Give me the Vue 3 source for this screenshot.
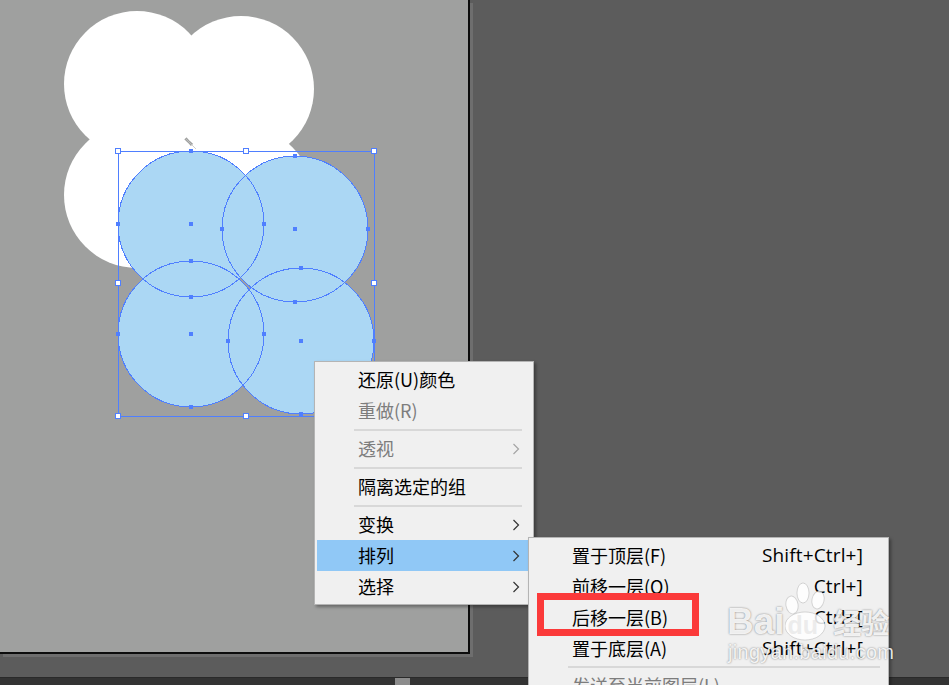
<script setup>
const whites = [
  { cx: 137, cy: 84 },
  { cx: 241, cy: 89 },
  { cx: 137, cy: 195 },
  { cx: 241, cy: 199 }
]
const blues = [
  { cx: 191, cy: 224 },
  { cx: 295, cy: 229 },
  { cx: 191, cy: 334 },
  { cx: 301, cy: 341 }
]
const r = 73
const handles = [
  [118, 151], [246, 151], [374, 151],
  [118, 283], [374, 283],
  [118, 416], [246, 416], [374, 416]
]
const anchors = blues.flatMap(c => [
  [c.cx, c.cy],
  [c.cx - r, c.cy],
  [c.cx + r, c.cy],
  [c.cx, c.cy - r],
  [c.cx, c.cy + r]
])
const mainMenu = [
  { label: '还原(U)颜色' },
  { label: '重做(R)', disabled: true },
  { sep: true },
  { label: '透视', disabled: true, arrow: true },
  { sep: true },
  { label: '隔离选定的组' },
  { sep: true },
  { label: '变换', arrow: true },
  { label: '排列', arrow: true, active: true },
  { label: '选择', arrow: true }
]
const subMenu = [
  { label: '置于顶层(F)', key: 'Shift+Ctrl+]' },
  { label: '前移一层(O)', key: 'Ctrl+]' },
  { label: '后移一层(B)', key: 'Ctrl+[' },
  { label: '置于底层(A)', key: 'Shift+Ctrl+[' },
  { sep: true },
  { label: '发送至当前图层(L)', disabled: true }
]
</script>

<template>
  <div class="app">
    <div class="workspace">
      <div class="artboard"></div>
    </div>
    <div class="scrollbar"><div class="thumb"></div></div>

    <svg class="art" width="949" height="685" viewBox="0 0 949 685">
      <circle v-for="(c, i) in whites" :key="'w' + i" :cx="c.cx" :cy="c.cy" :r="r" fill="#fff" />
      <path d="M186 139 L196 149" stroke="#c4c4c4" stroke-width="0.8" fill="none" />
      <circle v-for="(c, i) in blues" :key="'f' + i" :cx="c.cx" :cy="c.cy" :r="r" fill="#abd7f4" />
      <circle v-for="(c, i) in blues" :key="'s' + i" :cx="c.cx" :cy="c.cy" :r="r" fill="none" stroke="#4f7fff" stroke-width="1" shape-rendering="crispEdges" />
      <rect x="118.5" y="151.5" width="256" height="265" fill="none" stroke="#4f7fff" stroke-width="1" />
      <rect v-for="(a, i) in anchors" :key="'a' + i" :x="a[0] - 2" :y="a[1] - 2" width="4" height="4" fill="#4f7fff" />
      <rect v-for="(h, i) in handles" :key="'h' + i" :x="h[0] - 2.5" :y="h[1] - 2.5" width="5" height="5" fill="#fff" stroke="#4f7fff" stroke-width="1" />
    </svg>

    <div class="menu main-menu">
      <template v-for="(item, i) in mainMenu" :key="i">
        <div v-if="item.sep" class="sep"></div>
        <div v-else class="row" :class="{ disabled: item.disabled, active: item.active }">
          <span class="label">{{ item.label }}</span>
          <svg v-if="item.arrow" class="arrow" width="8" height="12" viewBox="0 0 8 12">
            <path d="M1.5 1 L6.5 6 L1.5 11" fill="none" stroke="currentColor" stroke-width="1.2" />
          </svg>
        </div>
      </template>
    </div>

    <div class="menu sub-menu">
      <template v-for="(item, i) in subMenu" :key="i">
        <div v-if="item.sep" class="sep"></div>
        <div v-else class="row" :class="{ disabled: item.disabled }">
          <span class="label">{{ item.label }}</span>
          <span class="key">{{ item.key }}</span>
        </div>
      </template>
    </div>

    <div class="highlight-box"></div>

    <div class="watermark">
      <svg class="paw" width="60" height="62" viewBox="0 0 60 62">
        <g fill="#fff" fill-opacity="0.85" stroke="#000" stroke-opacity="0.14" stroke-width="1">
          <ellipse cx="7" cy="23" rx="6" ry="9" transform="rotate(-10 7 23)" />
          <ellipse cx="18" cy="11" rx="6" ry="10" />
          <ellipse cx="33" cy="18" rx="6" ry="9" transform="rotate(12 33 18)" />
          <ellipse cx="20" cy="44" rx="20" ry="14" />
        </g>
      </svg>
      <div class="wm-line">
        <span class="wm-bai">Bai</span><span class="wm-du">du</span><span class="wm-cn">经验</span>
      </div>
      <div class="wm-url">jingyan.baidu.com</div>
    </div>
  </div>
</template>

<style>
html, body { margin: 0; background: #5c5c5c; }
</style>

<style scoped>
.app {
  position: relative;
  width: 949px;
  height: 685px;
  overflow: hidden;
  display: flex;
  flex-direction: column;
  background: #5c5c5c;
  font-family: "Noto Sans CJK SC", "Noto Sans", sans-serif;
  color: #000;
}
.workspace {
  flex: 1;
  min-height: 0;
}
.artboard {
  width: 468px;
  height: 652px;
  box-sizing: content-box;
  background: #9fa09f;
  border-right: 2px solid #0c0c0c;
  border-bottom: 2px solid #0c0c0c;
  box-shadow: 3px 3px 0 #6e6e6e;
}
.scrollbar {
  height: 7px;
  background: #333;
  border-top: 1px solid #2a2a2a;
  display: flex;
  padding-left: 395px;
}
.thumb {
  width: 15px;
  background: #8c8c8c;
}
.art {
  position: absolute;
  left: 0;
  top: 0;
}
.menu {
  position: absolute;
  box-sizing: border-box;
  background: #f0f0f0;
  border: 1px solid #b4b4b4;
  box-shadow: 2px 2px 3px rgba(0, 0, 0, 0.35);
  font-size: 18px;
}
.main-menu {
  left: 314px;
  top: 361px;
  width: 220px;
  height: 244px;
  padding: 2px;
}
.sub-menu {
  left: 528px;
  top: 537px;
  width: 361px;
  height: 170px;
  padding: 2px;
}
.row {
  height: 31px;
  display: flex;
  align-items: center;
  justify-content: space-between;
  padding-left: 41px;
  padding-right: 23px;
  line-height: 31px;
  white-space: nowrap;
}
.main-menu .row {
  padding-right: 11px;
}
.row.active {
  background: #90c8f6;
}
.row.disabled {
  color: #7d7d7d;
}
.label {
  display: block;
}
.key {
  font-family: "Open Sans", "Noto Sans", sans-serif;
  font-size: 19px;
  letter-spacing: 0.15px;
}
.arrow {
  color: #333;
  flex: none;
}
.disabled .arrow {
  color: #a5a5a5;
}
.sep {
  height: 2px;
  margin: 3px 9px 2px 37px;
  background: #d8d8d8;
}
.sub-menu .sep {
  margin: 2px 6px 2px 37px;
}
.highlight-box {
  position: absolute;
  left: 537px;
  top: 593px;
  width: 162px;
  height: 43px;
  box-sizing: border-box;
  border: 7px solid #fb3a3a;
}
.watermark {
  position: absolute;
  left: 727px;
  top: 578px;
  width: 170px;
  height: 86px;
  color: rgba(255, 255, 255, 0.88);
  font-family: "Liberation Sans", sans-serif;
  text-shadow: 0 0 2px rgba(0, 0, 0, 0.5);
  pointer-events: none;
}
.paw {
  position: absolute;
  left: 58px;
  top: 4px;
}
.wm-line {
  position: absolute;
  left: 0;
  top: 24px;
  display: flex;
  align-items: baseline;
  font-weight: 700;
  line-height: 40px;
  white-space: nowrap;
}
.wm-bai {
  font-size: 37px;
}
.wm-du {
  font-size: 25px;
  margin-left: 3px;
  color: rgba(225, 225, 225, 0.6);
  text-shadow: none;
}
.wm-cn {
  font-family: "Noto Sans CJK SC", sans-serif;
  font-size: 28px;
  margin-left: 15px;
}
.wm-url {
  position: absolute;
  left: 1px;
  top: 62px;
  font-size: 20px;
  line-height: 24px;
  letter-spacing: 0.3px;
  white-space: nowrap;
}
</style>
